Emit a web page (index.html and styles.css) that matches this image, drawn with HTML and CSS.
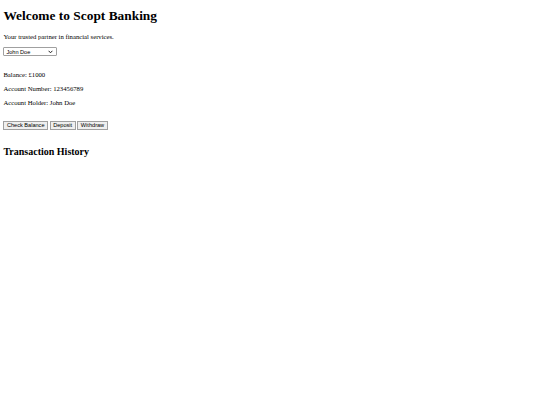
FILE: index.html
```html
<!DOCTYPE html>
<html lang="en">
<head>
    <meta charset="UTF-8">
    <title>Scopt Banking</title>
    <link rel="stylesheet" href="styles.css">
</head>
<body>
    <div class="header">
        <h1>Welcome to Scopt Banking</h1>
        <p>Your trusted partner in financial services.</p>
        <select id="userSelect" class="user-select">
            <option>John Doe</option>
            <option>Jane Smith</option>
        </select>
    </div>

    <div class="account-info">
        <p>Balance: £<span id="balance">1000</span></p>
        <p>Account Number: <span id="accountNumber">123456789</span></p>
        <p>Account Holder: <span id="accountHolder">John Doe</span></p>
    </div>

    <div class="actions">
        <button class="btn">Check Balance</button>
        <button class="btn">Deposit</button>
        <button class="btn">Withdraw</button>
    </div>

    <div class="history">
        <h2>Transaction History</h2>
        <ul id="transactionList"></ul>
    </div>
</body>
</html>
```

FILE: styles.css
```css
body {
    margin: 3.4px;
    font-family: "Liberation Serif", "Times New Roman", serif;
    font-size: 6.7px;
    color: #000;
    background: #fff;
}

h1 {
    font-size: 13.4px;
    line-height: 15px;
    margin: 5px 0 10px;
}

h2 {
    font-size: 10px;
    line-height: 11.5px;
    margin: 8.3px 0;
}

p {
    line-height: 7.3px;
    margin: 6.7px 0;
}

.header {
    margin-bottom: 14.7px;
}

.user-select {
    -webkit-appearance: none;
    appearance: none;
    font-family: "Liberation Sans", Arial, sans-serif;
    font-size: 5.6px;
    color: #000;
    width: 54px;
    height: 9px;
    padding: 0 2px;
    border: 1px solid #a0a0a0;
    border-radius: 1px;
    background: #fff url("data:image/svg+xml,%3Csvg xmlns='http://www.w3.org/2000/svg' width='5' height='4' viewBox='0 0 5 4'%3E%3Cpath d='M0.6 0.8 L2.5 2.8 L4.4 0.8' fill='none' stroke='%23222' stroke-width='1'/%3E%3C/svg%3E") no-repeat right 3px center;
}

.actions {
    margin: 14.3px 0 16.3px;
}

.btn {
    -webkit-appearance: none;
    appearance: none;
    font-family: "Liberation Sans", Arial, sans-serif;
    font-size: 5.6px;
    color: #000;
    height: 9px;
    padding: 0 2.5px;
    border: 1px solid #a0a0a0;
    border-radius: 0;
    background: #efefef;
}
```
